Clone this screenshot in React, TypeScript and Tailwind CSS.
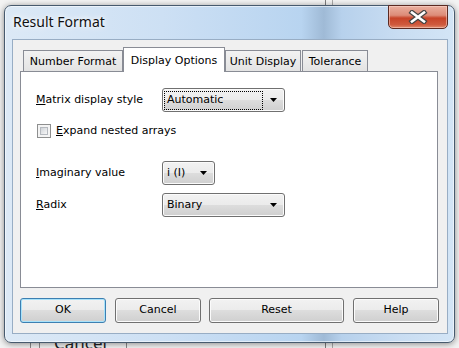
import React from "react";

const ui = "font-['DejaVu_Sans',sans-serif] text-[11px] text-black";
const face =
  "bg-[linear-gradient(#f2f2f2_0%,#ebebeb_50%,#dddddd_50%,#cfcfcf_100%)] shadow-[inset_0_0_0_1px_#fbfbfb]";

function Arrow() {
  return (
    <svg width="7" height="4" viewBox="0 0 7 4" className="mr-[7px] shrink-0">
      <polygon points="0,0 7,0 3.5,4" fill="#000" />
    </svg>
  );
}

function Combo({ value, width, focused }: { value: string; width: string; focused?: boolean }) {
  return (
    <div
      className={`flex h-[24px] items-center rounded-[3px] border border-[#707070] ${face} ${width}`}
    >
      <div
        className={`ml-px flex h-[19px] flex-1 items-center pl-[2px] ${
          focused ? "border border-dotted border-black" : "border border-transparent"
        }`}
      >
        {value}
      </div>
      <div className="flex w-[21px] items-center justify-end">
        <Arrow />
      </div>
    </div>
  );
}

function Button({ label, width, focused }: { label: string; width: string; focused?: boolean }) {
  return (
    <div
      className={`flex h-[25px] items-center justify-center rounded-[3px] border ${width} ${
        focused
          ? "border-[#3c7fb1] bg-[linear-gradient(#f2f2f2_0%,#ebebeb_50%,#dddddd_50%,#cfcfcf_100%)] shadow-[inset_0_0_0_1px_#a8e2fa]"
          : `border-[#707070] ${face}`
      }`}
    >
      {label}
    </div>
  );
}

function Tab({ label, width, active }: { label: string; width: string; active?: boolean }) {
  if (active) {
    return (
      <div
        className={`relative z-10 -mb-px flex h-[25px] items-start justify-center border border-b-0 border-[#898c95] bg-white pt-[5px] ${width}`}
      >
        {label}
      </div>
    );
  }
  return (
    <div
      className={`flex h-[21px] items-center justify-center border border-b-0 border-[#898c95] bg-[linear-gradient(#f2f2f2,#e3e3e3)] pt-[2px] ${width}`}
    >
      {label}
    </div>
  );
}

function CloseGlyph() {
  return (
    <svg width="20" height="14" viewBox="0 0 20 14">
      <path d="M4 2.5 L16 11.5 M16 2.5 L4 11.5" stroke="#444" strokeWidth="5" strokeLinecap="square" />
      <path d="M4 2.5 L16 11.5 M16 2.5 L4 11.5" stroke="#fff" strokeWidth="2.6" strokeLinecap="square" />
    </svg>
  );
}

export default function App() {
  return (
    <div className="relative h-[348px] w-[459px] overflow-hidden bg-[#f3f3f3]">
      {/* window behind */}
      <div className="absolute left-[325px] top-0 h-full w-px bg-[#7d7d7d]" />
      <div className="absolute left-[332px] top-0 h-full w-px bg-[#a9a9a9]" />
      <div className="absolute left-[30px] top-[330px] h-[20px] w-px bg-[#8a8a8a]" />
      <div className="absolute left-[39px] top-[330px] h-[20px] w-[88px] border-x border-[#8a8a8a]" />
      <div className="absolute left-[54px] top-[333px] font-['Noto_Sans',sans-serif] text-[17px] leading-[20px] text-[#222]">
        Cancel
      </div>

      {/* dialog */}
      <div className="absolute left-[4px] top-[5px] flex h-[338px] w-[451px] flex-col rounded-[7px] border border-[#475a6e] bg-[linear-gradient(90deg,#dce9f6_0%,#cde0f4_35%,#b8d4f0_66%,#9fbad6_71%,#b7d1ec_75%,#c9ddf2_88%,#d3e5f6_100%)] shadow-[0_1px_6px_rgba(0,0,0,0.45),inset_0_0_0_1px_rgba(255,255,255,0.55)]">
        <div className="flex h-[33px] items-start justify-between pl-[8px]">
          <div className="pt-[6px] font-['Noto_Sans',sans-serif] text-[14px] leading-[19px] text-[#111] [text-shadow:0_0_8px_#fff,0_0_4px_#fff]">
            Result Format
          </div>
          <div className="-mt-px mr-[6px] flex h-[24px] w-[60px] items-center justify-center rounded-b-[5px] border border-[#5b2a22] bg-[linear-gradient(#eab0a0_0%,#dd8c78_42%,#c74328_55%,#cf5a3e_85%,#e08a6c_100%)] shadow-[inset_0_0_0_1px_rgba(255,220,210,0.5)]">
            <CloseGlyph />
          </div>
        </div>

        <div className={`mx-[7px] mb-[8px] mr-[6px] flex flex-1 flex-col border border-[#98adc4] bg-[#f0f0f0] px-[7px] pt-[7px] ${ui}`}>
          <div className="flex h-[24px] items-end pl-[3px]">
            <Tab label="Number Format" width="w-[100px]" />
            <Tab label="Display Options" width="w-[102px]" active />
            <Tab label="Unit Display" width="w-[76px]" />
            <div className="w-px" />
            <Tab label="Tolerance" width="w-[66px]" />
          </div>

          <div className="flex h-[217px] w-[418px] flex-col border border-[#898c95] bg-white pl-[15px] pt-[16px]">
            <div className="flex items-center">
              <div className="w-[126px]">
                <span className="underline">M</span>atrix display style
              </div>
              <Combo value="Automatic" width="w-[123px]" focused />
            </div>

            <div className="mt-[12px] flex h-[14px] items-center gap-[5px] pl-px">
              <div className="h-[14px] w-[14px] border border-[#8e8f8f] bg-[#f4f4f4] p-[2px]">
                <div className="h-full w-full border border-[#b5b9bf] bg-[linear-gradient(135deg,#cfd3d8,#f7f7f7)]" />
              </div>
              <div className="pt-px">
                <span className="underline">E</span>xpand nested arrays
              </div>
            </div>

            <div className="mt-[23px] flex items-center">
              <div className="w-[126px]">
                <span className="underline">I</span>maginary value
              </div>
              <Combo value="i (I)" width="w-[53px]" />
            </div>

            <div className="mt-[8px] flex items-center">
              <div className="w-[126px]">
                <span className="underline">R</span>adix
              </div>
              <Combo value="Binary" width="w-[123px]" />
            </div>
          </div>

          <div className="mt-[10px] flex">
            <Button label="OK" width="w-[86px]" focused />
            <div className="w-[9px]" />
            <Button label="Cancel" width="w-[86px]" />
            <div className="w-[8px]" />
            <Button label="Reset" width="w-[135px]" />
            <div className="w-[9px]" />
            <Button label="Help" width="w-[86px]" />
          </div>
        </div>
      </div>
    </div>
  );
}
